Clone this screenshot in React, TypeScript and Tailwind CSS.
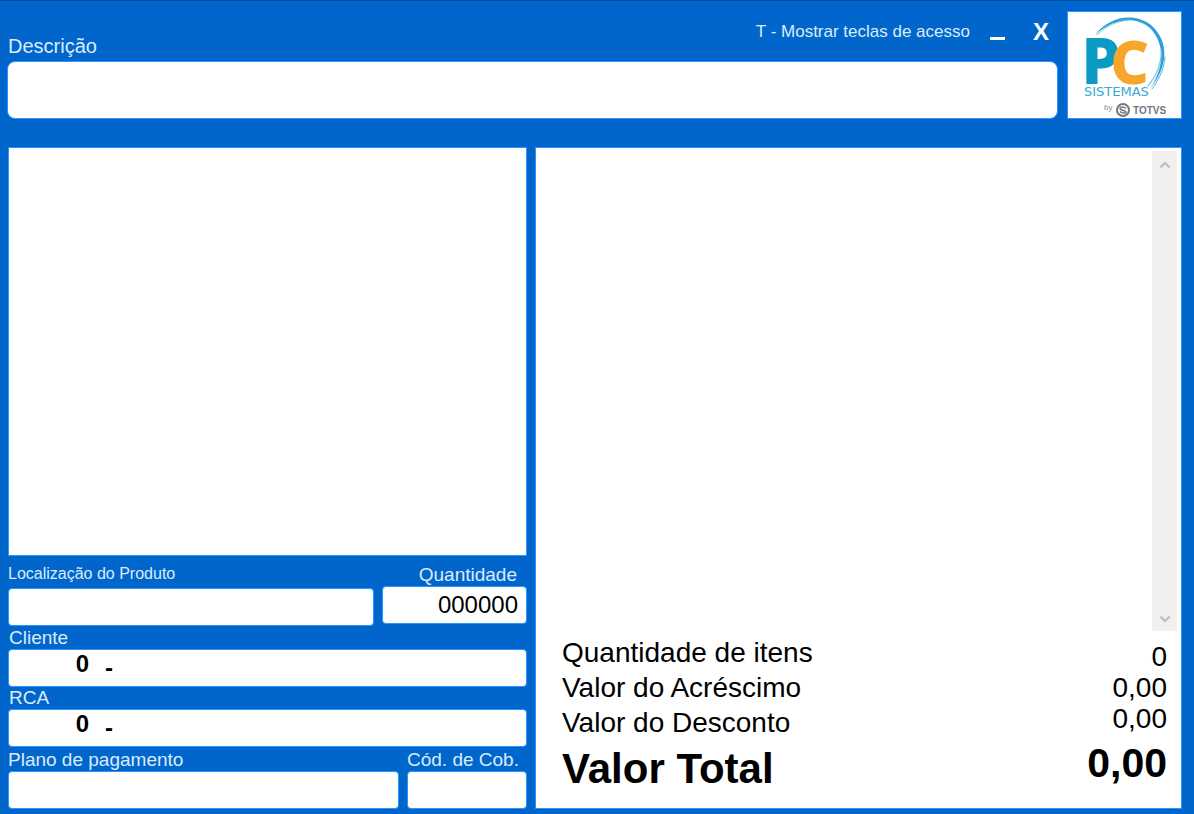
import type { InputHTMLAttributes } from "react";

const box =
  "block w-full min-w-0 bg-white border border-[#2b95ff] text-black outline-none";

type FieldProps = InputHTMLAttributes<HTMLInputElement> & {
  id: string;
  label: string;
  labelClass?: string;
  boxClass?: string;
};

function Field({
  id,
  label,
  labelClass = "",
  boxClass = "",
  ...rest
}: FieldProps) {
  return (
    <div className="flex min-w-0 flex-col">
      <label htmlFor={id} className={`whitespace-nowrap text-[#dcebfb] ${labelClass}`}>
        {label}
      </label>
      <input id={id} className={`${box} h-[38px] rounded-[4px] ${boxClass}`} {...rest} />
    </div>
  );
}

function CodeField({ id, label }: { id: string; label: string }) {
  return (
    <div className="flex flex-col">
      <label htmlFor={id} className="pl-px text-[19px] leading-[22px] text-[#dcebfb]">
        {label}
      </label>
      <div className="flex h-[38px] items-start overflow-hidden rounded-[4px] border border-[#2b95ff] bg-white text-[24px] font-bold text-black">
        <input
          id={id}
          defaultValue="0"
          className="h-7 w-20 bg-transparent text-right outline-none"
        />
        <input
          aria-label={`${label} - nome`}
          defaultValue="-"
          className="h-9 min-w-0 flex-1 bg-transparent pl-4 outline-none"
        />
      </div>
    </div>
  );
}

function Logo() {
  return (
    <svg viewBox="0 0 115 108" className="block h-[108px] w-[115px]" role="img" aria-label="PC Sistemas by TOTVS">
      <rect x="0.5" y="0.5" width="114" height="107" fill="#fff" stroke="#2b95ff" />
      <path d="M28 24C42 5 68 1 84 14C103 31 101 56 83 78C98 55 98 33 83 17C68 4 45 8 28 24Z" fill="#2a9fdc" />
      <g fill="none" strokeLinecap="round">
        <path d="M30 24C40 14 51 10 62 9" stroke="#7cc8e6" strokeWidth="1" />
        <path d="M94 38C95 51 90 64 81 75" stroke="#7cc8e6" strokeWidth="1.2" />
        <path d="M98 46C97 58 92 69 85 78" stroke="#5ab4e2" strokeWidth="1" />
      </g>
      <text x="15" y="72" fontSize="60" fontWeight="700" fill="#0a9bc4" stroke="#0a9bc4" strokeWidth="2" className="font-['Liberation_Sans_Narrow','Open_Sans',sans-serif]">P</text>
      <text x="44" y="72" fontSize="58" fontWeight="700" fill="#f7a62b" stroke="#f7a62b" strokeWidth="2" className="font-['Liberation_Sans_Narrow','Open_Sans',sans-serif]">C</text>
      <text x="17" y="85" fontSize="13" fill="#35a9d2" className="font-['DejaVu_Sans',sans-serif]">SISTEMAS</text>
      <text x="37" y="99" fontSize="8" fill="#8d8a94">by</text>
      <g fill="none" stroke="#77747f">
        <circle cx="56" cy="99" r="6" strokeWidth="2" />
        <path d="M59 97.500C57 95.500 53 95.500 53 97.500S59 99.500 59 101S55 102.500 53 100.500" strokeWidth="1.5" />
      </g>
      <text x="66" y="103" fontSize="10" fontWeight="700" fill="#77747f">TOTVS</text>
    </svg>
  );
}

function Chevron({ up = false }: { up?: boolean }) {
  return (
    <svg viewBox="0 0 12 8" className="h-2 w-3" fill="none" stroke="#bfbfc3" strokeWidth="2.4" aria-hidden="true">
      <path d={up ? "M1.500 6.500L6 2L10.500 6.500" : "M1.500 1.500L6 6L10.500 1.500"} />
    </svg>
  );
}

const totals = [
  { id: "itens", label: "Quantidade de itens", value: "0" },
  { id: "acrescimo", label: "Valor do Acréscimo", value: "0,00" },
  { id: "desconto", label: "Valor do Desconto", value: "0,00" },
];

export default function App() {
  return (
    <div className="flex min-h-screen flex-col border-t border-[#00509f] bg-[#0066cc] pt-[10px] pr-3 pb-[5px] pl-[7px] font-['Liberation_Sans',Arial,sans-serif]">
      <header className="flex gap-[9px]">
        <div className="flex min-w-0 flex-1 flex-col">
          <div className="flex h-[50px] items-end justify-between">
            <label htmlFor="descricao" className="pl-px text-[20px] leading-[30px] text-[#dcebfb]">
              Descrição
            </label>
            <div className="flex h-[42px] items-center self-start pr-[9px] text-white">
              <button type="button" className="whitespace-nowrap pr-5 text-[17px] text-[#dcebfb]">
                T - Mostrar teclas de acesso
              </button>
              <button type="button" aria-label="Minimizar" className="flex h-4 w-[15px] items-end">
                <span className="block h-[3px] w-full bg-white" />
              </button>
              <button type="button" aria-label="Fechar" className="pl-7 text-[24px] leading-6 font-bold">
                X
              </button>
            </div>
          </div>
          <input id="descricao" className={`${box} h-[58px] rounded-[8px] px-3 text-[32px]`} />
        </div>
        <Logo />
      </header>

      <main className="mt-7 grid flex-1 grid-cols-[519fr_647fr] gap-2 pl-px">
        <section className="flex min-w-0 flex-col">
          <div className="min-h-40 flex-1 border border-[#2b95ff] bg-white" />
          <div className="mt-1 mb-px grid grid-cols-[366fr_145fr] gap-2">
            <Field
              id="localizacao"
              label="Localização do Produto"
              labelClass="pt-1 pb-1 text-[16px] leading-5"
              boxClass="px-2 text-[20px]"
            />
            <Field
              id="quantidade"
              label="Quantidade"
              labelClass="pt-1 pr-[10px] text-right text-[19px] leading-[22px]"
              boxClass="px-2 text-right text-[24px]"
              defaultValue="000000"
            />
          </div>
          <CodeField id="cliente" label="Cliente" />
          <CodeField id="rca" label="RCA" />
          <div className="grid grid-cols-[391fr_120fr] gap-2">
            <Field id="plano" label="Plano de pagamento" labelClass="pt-0.5 text-[19px] leading-[22px]" boxClass="px-2 text-[20px]" />
            <Field id="cobranca" label="Cód. de Cob." labelClass="pt-0.5 text-[19px] leading-[22px]" boxClass="px-2 text-[20px]" />
          </div>
        </section>

        <section className="flex min-w-0 flex-col border border-[#2b95ff] bg-white pt-[3px] text-black">
          <div className="flex flex-1 justify-end pr-1">
            <div className="flex w-[25px] flex-col items-center justify-between bg-[#f0f0f0] pt-[10px] pb-2">
              <button type="button" aria-label="Rolar para cima">
                <Chevron up />
              </button>
              <button type="button" aria-label="Rolar para baixo">
                <Chevron />
              </button>
            </div>
          </div>
          <div className="flex justify-between pt-1 pr-[14px] pb-[14px] pl-[26px]">
            <div className="flex flex-col text-[28px] leading-[35px]">
              {totals.map((t) => (
                <label key={t.id} htmlFor={t.id}>
                  {t.label}
                </label>
              ))}
              <label htmlFor="total" className="pt-1 text-[42px] leading-[50px] font-bold">
                Valor Total
              </label>
            </div>
            <div className="flex flex-col pt-[6px] text-right text-[28px] leading-[31px]">
              {totals.map((t) => (
                <output key={t.id} id={t.id}>
                  {t.value}
                </output>
              ))}
              <output id="total" className="pt-1 text-[41px] leading-[50px] font-bold">
                0,00
              </output>
            </div>
          </div>
        </section>
      </main>
    </div>
  );
}
